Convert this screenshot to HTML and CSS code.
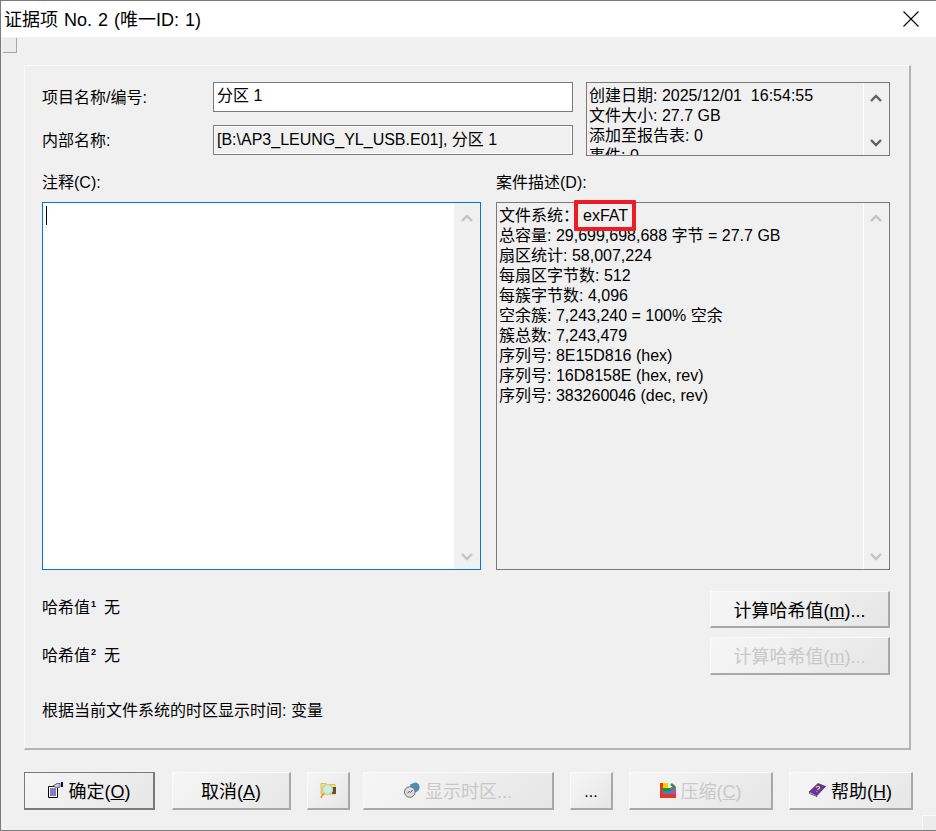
FILE: index.html
```html
<!DOCTYPE html>
<html lang="zh-CN">

<head>
    <meta charset="UTF-8">
    <link rel="stylesheet" href="styles.css">
    <title>证据项 No. 2</title>
</head>

<body>
    <div class="window">
        <div class="titlebar">
            <span class="title">证据项 No. 2 (唯一ID: 1)</span>
            <svg class="close" width="16" height="16" viewBox="0 0 16 16">
                <path d="M0.5 0.5L15.5 15.5M15.5 0.5L0.5 15.5" stroke="#000" stroke-width="1.1" fill="none" />
            </svg>
        </div>

        <div class="client">
            <div class="grip-top"></div>

            <div class="panel">
                <div class="top-grid">
                    <label class="lbl">项目名称/编号:</label>
                    <div class="field">分区 1</div>
                    <div class="info-box">
                        <div class="info-text">
                            <div>创建日期: 2025/12/01&nbsp; 16:54:55</div>
                            <div>文件大小: 27.7 GB</div>
                            <div>添加至报告表: 0</div>
                            <div>事件: 0</div>
                        </div>
                        <div class="scroll flat">
                            <svg class="arrow" viewBox="0 0 12 8"><path d="M1 7L6 2L11 7" /></svg>
                            <svg class="arrow" viewBox="0 0 12 8"><path d="M1 1L6 6L11 1" /></svg>
                        </div>
                    </div>
                    <label class="lbl">内部名称:</label>
                    <div class="field readonly">[B:\AP3_LEUNG_YL_USB.E01], 分区 1</div>
                </div>

                <div class="mid-grid">
                    <div class="col">
                        <label class="lbl cap">注释(C):</label>
                        <div class="memo notes">
                            <div class="memo-body"><span class="caret"></span></div>
                            <div class="scroll">
                                <svg class="arrow off" viewBox="0 0 12 8"><path d="M1 7L6 2L11 7" /></svg>
                                <svg class="arrow off" viewBox="0 0 12 8"><path d="M1 1L6 6L11 1" /></svg>
                            </div>
                        </div>
                    </div>
                    <div class="col">
                        <label class="lbl cap">案件描述(D):</label>
                        <div class="memo desc">
                            <div class="memo-body">
                                <div>文件系统：<span class="mark">exFAT</span></div>
                                <div>总容量: 29,699,698,688 字节 = 27.7 GB</div>
                                <div>扇区统计: 58,007,224</div>
                                <div>每扇区字节数: 512</div>
                                <div>每簇字节数: 4,096</div>
                                <div>空余簇: 7,243,240 = 100% 空余</div>
                                <div>簇总数: 7,243,479</div>
                                <div>序列号: 8E15D816 (hex)</div>
                                <div>序列号: 16D8158E (hex, rev)</div>
                                <div>序列号: 383260046 (dec, rev)</div>
                            </div>
                            <div class="scroll flat">
                                <svg class="arrow off" viewBox="0 0 12 8"><path d="M1 7L6 2L11 7" /></svg>
                                <svg class="arrow off" viewBox="0 0 12 8"><path d="M1 1L6 6L11 1" /></svg>
                            </div>
                        </div>
                    </div>
                </div>

                <div class="hash-row">
                    <div class="hash-text first">哈希值<sup>1</sup><span class="hash-val">无</span></div>
                    <button class="btn hash-btn"><span>计算哈希值(<u>m</u>)...</span></button>
                </div>
                <div class="hash-row second">
                    <div class="hash-text">哈希值<sup>2</sup><span class="hash-val">无</span></div>
                    <button class="btn hash-btn off"><span>计算哈希值(<u>m</u>)...</span></button>
                </div>

                <div class="tz-note">根据当前文件系统的时区显示时间: 变量</div>
            </div>

            <div class="actions">
                <button class="btn ok">
                    <svg class="ico" width="16" height="16" viewBox="0 0 16 16">
                        <path d="M1.5 4.5H10.5V15.5H1.5Z" fill="#fff" stroke="#000" />
                        <path d="M3 7H9M3 9H9M3 11H9M3 13H9" stroke="#000080" stroke-width="1" />
                        <path d="M6 4L10 1.5H13V5L10 6Z" fill="#c9c9c9" stroke="#333" stroke-width="0.7" />
                        <rect x="14" y="0" width="2" height="5" fill="#000080" />
                    </svg>
                    <span>确定(<u>O</u>)</span>
                </button>
                <button class="btn cancel"><span>取消(<u>A</u>)</span></button>
                <button class="btn folder">
                    <svg width="17" height="17" viewBox="0 0 17 17">
                        <path d="M1 4V1.5H6L7 2.5H15V12H1Z" fill="#f6e08a" stroke="#c9b25e" stroke-width="0.8" />
                        <path d="M12 5H16V12H12Z" fill="#55513c" />
                        <circle cx="7.5" cy="7.5" r="5" fill="#c4eef6" stroke="#e2cd66" stroke-width="1.4" />
                        <path d="M3.8 11.5L0.8 15.8" stroke="#f09030" stroke-width="1.6" />
                    </svg>
                </button>
                <button class="btn tz off">
                    <svg class="ico" width="16" height="16" viewBox="0 0 16 16">
                        <path d="M6 2.5L11 0.5C14 0.5 16 3 15.5 6C15.2 8 14 9.5 12 10L8 11Z" fill="#4d8fae" />
                        <circle cx="5.8" cy="10" r="5.3" fill="#dcdcdc" stroke="#6f6f6f" />
                        <path d="M3.5 11L5.5 9.5L6.5 10.5L8.5 8" stroke="#555" fill="none" />
                    </svg>
                    <span>显示时区...</span>
                </button>
                <button class="btn more"><span>...</span></button>
                <button class="btn zip off">
                    <svg class="ico" width="16" height="15" viewBox="0 0 16 15">
                        <rect x="0" y="0" width="3" height="15" fill="#e23a22" />
                        <rect x="0" y="11" width="16" height="4" fill="#e23a22" />
                        <rect x="3" y="0" width="5" height="5" fill="#fdd000" />
                        <rect x="3" y="5" width="8" height="3" fill="#10a020" />
                        <rect x="3" y="8" width="10" height="3" fill="#4a78e0" />
                        <rect x="11" y="4" width="5" height="7" fill="#9a5fa8" />
                        <path d="M11 1L15 4.5" stroke="#1a9a30" stroke-width="2.4" />
                    </svg>
                    <span>压缩(<u>C</u>)</span>
                </button>
                <button class="btn help">
                    <svg class="ico" width="17" height="16" viewBox="0 0 17 14">
                        <path d="M0.5 8.5L9 0.5L16.5 3.5L8 12.5Z" fill="#6a35a8" stroke="#40206e" stroke-width="0.7" />
                        <path d="M0.5 8.5V10.5L8 13.5L8 12.5Z" fill="#cfc6da" stroke="#40206e" stroke-width="0.7" />
                        <path d="M7 4.5C8 3 11 3.2 10.5 5C10.2 6 8.8 6 8.5 7M7.6 8.8L8 8.4" stroke="#f7e04a" stroke-width="1.2" fill="none" />
                    </svg>
                    <span>帮助(<u>H</u>)</span>
                </button>
            </div>

            <div class="grip-bottom"></div>
        </div>
    </div>
</body>

</html>
```

FILE: styles.css
```css
* {
    margin: 0;
    padding: 0;
    box-sizing: border-box;
}

body {
    width: 936px;
    height: 831px;
    overflow: hidden;
    color: #000;
    font-family: "Liberation Sans", "Noto Sans CJK SC", sans-serif;
    font-size: 16px;
    background: #f0f0f0;
}

.window {
    height: 831px;
    display: flex;
    flex-direction: column;
    border: 1px solid #7a7a7a;
    border-right: none;
}

.titlebar {
    height: 36px;
    padding: 0 17px 3px 3px;
    display: flex;
    align-items: center;
    justify-content: space-between;
    background: #fff;
}

.title {
    font-size: 18px;
    word-spacing: 1px;
}

.close {
    margin-top: 3px;
}

.client {
    position: relative;
    flex: 1;
    padding: 28px 0 0 23px;
    background: #f0f0f0;
}

.grip-top {
    position: absolute;
    left: 2px;
    top: 1px;
    width: 14px;
    height: 15px;
    background: #ececec;
    border-right: 1px solid #a8a8a8;
    border-bottom: 1px solid #a8a8a8;
}

.grip-bottom {
    position: absolute;
    right: 0;
    bottom: 0;
    width: 14px;
    height: 15px;
    background: #ececec;
    border-top: 1px solid #fafafa;
    border-left: 1px solid #fafafa;
}

.panel {
    width: 887px;
    height: 685px;
    padding: 16px 0 0 17px;
    border-top: 1px solid #fafafa;
    border-left: 1px solid #fafafa;
    border-right: 2px solid #b4b4b4;
    border-bottom: 2px solid #b4b4b4;
}

.top-grid {
    display: grid;
    grid-template-columns: 171px 360px 317px;
    grid-template-rows: 30px 30px;
    row-gap: 13px;
}

.lbl {
    display: flex;
    align-items: center;
    padding-top: 2px;
    line-height: 20px;
}

.field {
    padding-left: 3px;
    line-height: 26px;
    background: #fff;
    border: 1px solid #7a7a7a;
}

.field.readonly {
    background: #f0f0f0;
    box-shadow: inset -1px -1px 0 #fff, inset 1px 1px 0 #fff;
    line-height: 27px;
}

.info-box {
    grid-column: 3;
    grid-row: 1 / span 2;
    margin-left: 13px;
    width: 304px;
    height: 74px;
    display: flex;
    overflow: hidden;
    border: 1px solid #7a7a7a;
}

.info-text {
    flex: 1;
    padding: 3px 0 0 2px;
    line-height: 20px;
    overflow: hidden;
    white-space: nowrap;
}

.scroll {
    width: 26px;
    padding: 11px 0 8px;
    display: flex;
    flex-direction: column;
    align-items: center;
    justify-content: space-between;
    background: #f0f0f0;
}

.scroll.flat {
    border-left: 1px solid #fff;
    padding-right: 2px;
}

.arrow {
    width: 12px;
    height: 8px;
    fill: none;
    stroke: #5f5f5f;
    stroke-width: 2.4;
}

.arrow.off {
    stroke: #c4c4c4;
}

.mid-grid {
    margin-top: 18px;
    display: grid;
    grid-template-columns: 439px 394px;
    column-gap: 15px;
}

.cap {
    height: 20px;
    margin-bottom: 9px;
    padding-top: 0;
}

.memo {
    position: relative;
    height: 368px;
    display: flex;
}

.memo-body {
    flex: 1;
    padding: 3px 0 0 2px;
    line-height: 20px;
    white-space: nowrap;
}

.notes {
    background: #fff;
    border: 1px solid #0078d7;
}

.caret {
    display: block;
    width: 1px;
    height: 19px;
    margin-left: 1px;
    background: #000;
}

.desc {
    border: 1px solid #7a7a7a;
}

.mark {
    position: relative;
    margin-left: 4px;
}

.mark::after {
    content: "";
    position: absolute;
    left: -9px;
    right: -8px;
    top: -7px;
    bottom: -7px;
    border: 4px solid #ed1c24;
    border-radius: 1px;
}

.hash-row {
    margin-top: 21px;
    height: 37px;
    display: flex;
    justify-content: space-between;
    align-items: center;
}

.hash-row.second {
    margin-top: 9px;
    height: 38px;
}

.hash-text {
    line-height: 20px;
}

.hash-text.first {
    margin-bottom: 4px;
}

.hash-text sup {
    font-size: 9px;
    font-weight: bold;
    vertical-align: 6px;
    line-height: 0;
    margin-left: 1px;
}

.hash-val {
    margin-left: 8px;
}

.tz-note {
    margin-top: 26px;
    line-height: 20px;
}

.btn {
    flex: none;
    height: 38px;
    padding-bottom: 1px;
    display: flex;
    align-items: center;
    justify-content: center;
    color: #000;
    font-family: inherit;
    font-size: 18px;
    white-space: pre;
    background: linear-gradient(135deg, #f6f6f6, #e6e6e6);
    border: 1px solid #fafafa;
    border-right: 2px solid #a8a8a8;
    border-bottom: 2px solid #a8a8a8;
}

.btn.off {
    color: #c8c8c8;
}

.hash-btn {
    width: 180px;
    height: 100%;
    margin-right: 19px;
}

.actions {
    margin-top: 22px;
    display: flex;
}

.ico {
    margin-right: 5px;
}

.ok {
    width: 131px;
    border: 1px solid #7a7a7a;
    border-right: 2px solid #7a7a7a;
    border-bottom: 2px solid #7a7a7a;
}

.cancel {
    width: 119px;
    margin-left: 17px;
}

.folder {
    width: 43px;
    margin-left: 16px;
}

.tz {
    width: 191px;
    margin-left: 13px;
}

.more {
    width: 43px;
    margin-left: 16px;
    align-items: flex-end;
    padding-bottom: 7px;
    font-size: 16px;
}

.zip {
    width: 144px;
    margin-left: 16px;
}

.help {
    width: 124px;
    margin-left: 16px;
}
```
